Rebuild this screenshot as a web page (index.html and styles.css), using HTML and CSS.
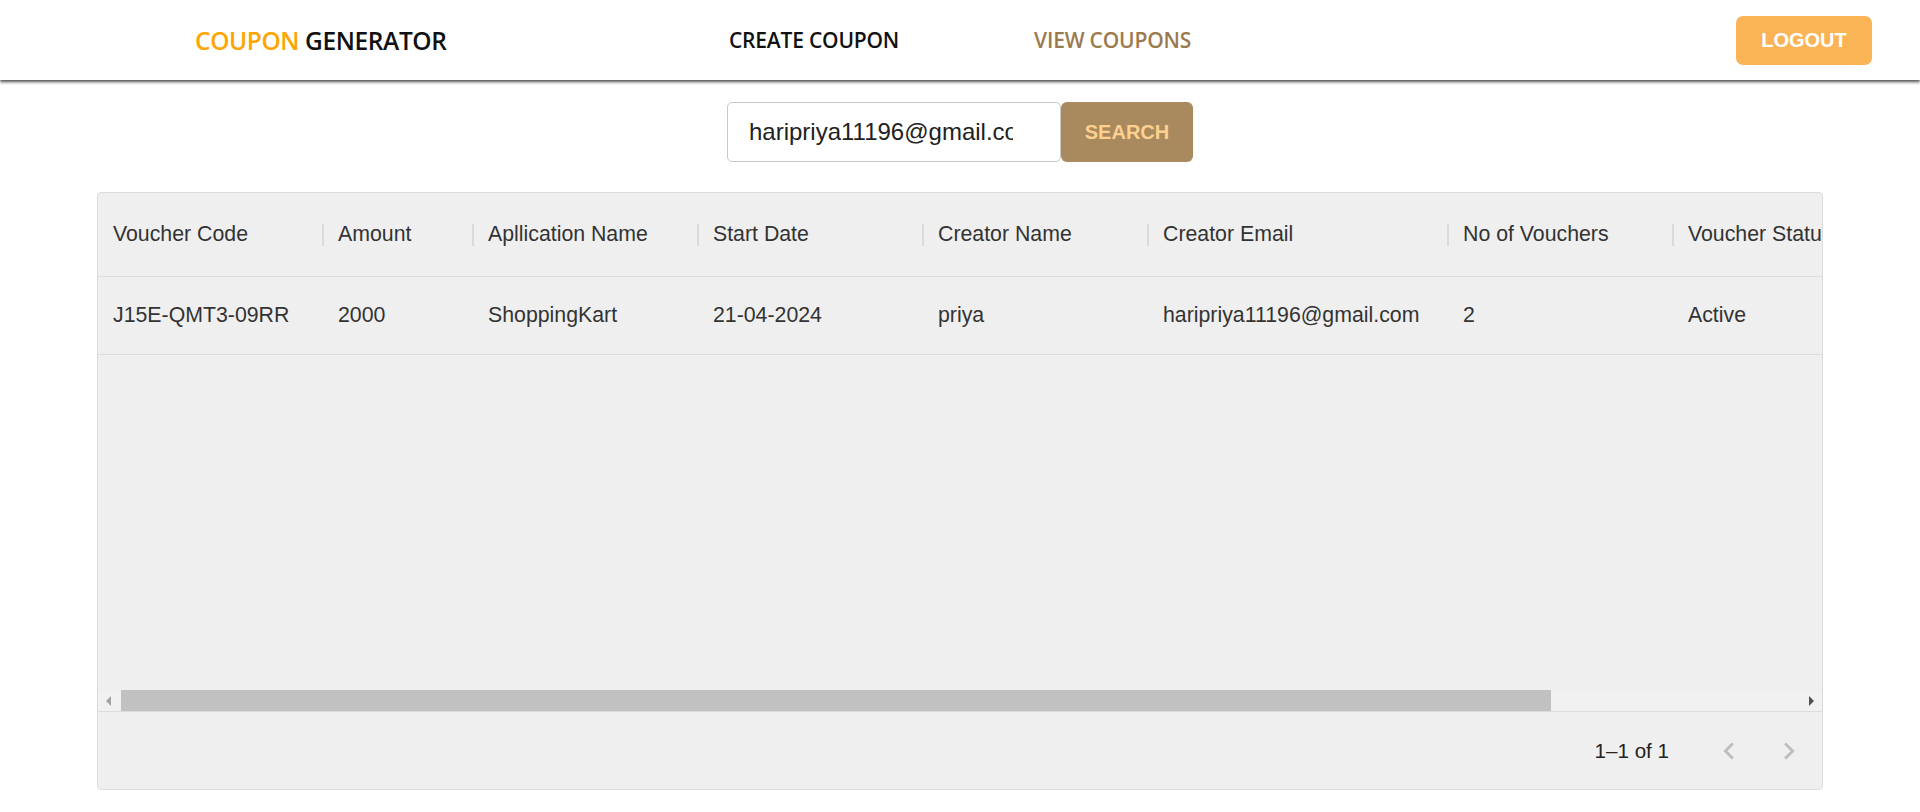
FILE: index.html
```html
<!DOCTYPE html>
<html lang="en">
<head>
<meta charset="utf-8">
<title>Coupon Generator</title>
<link rel="stylesheet" href="styles.css">
</head>
<body>
<header class="topbar">
  <div class="brand"><span class="brand-accent">COUPON</span> GENERATOR</div>
  <nav class="nav">
    <a class="nav-link">CREATE COUPON</a>
    <a class="nav-link nav-link--active">VIEW COUPONS</a>
  </nav>
  <button class="logout" type="button">LOGOUT</button>
</header>
<main class="page">
  <form class="search">
    <input class="search-input" type="text" value="haripriya11196@gmail.com">
    <button class="search-btn" type="button">SEARCH</button>
  </form>
  <section class="grid">
    <div class="grid-viewport">
      <div class="grid-head">
        <div class="cell head-cell w225">Voucher Code</div>
        <div class="cell head-cell w150">Amount</div>
        <div class="cell head-cell w225">Apllication Name</div>
        <div class="cell head-cell w225">Start Date</div>
        <div class="cell head-cell w225">Creator Name</div>
        <div class="cell head-cell w300">Creator Email</div>
        <div class="cell head-cell w225">No of Vouchers</div>
        <div class="cell head-cell w225">Voucher Status</div>
      </div>
      <div class="grid-row">
        <div class="cell w225">J15E-QMT3-09RR</div>
        <div class="cell w150">2000</div>
        <div class="cell w225">ShoppingKart</div>
        <div class="cell w225">21-04-2024</div>
        <div class="cell w225">priya</div>
        <div class="cell w300">haripriya11196@gmail.com</div>
        <div class="cell w225">2</div>
        <div class="cell w225">Active</div>
      </div>
    </div>
    <div class="hscroll">
      <span class="hscroll-btn hscroll-btn--left"></span>
      <div class="hscroll-track"><div class="hscroll-thumb"></div></div>
      <span class="hscroll-btn hscroll-btn--right"></span>
    </div>
    <div class="grid-footer">
      <span class="page-info">1–1 of 1</span>
      <div class="pager">
        <button class="pager-btn" type="button" aria-label="previous page">
          <svg viewBox="0 0 24 24" width="34" height="34"><path d="M15.41 7.41 14 6l-6 6 6 6 1.41-1.41L10.83 12z"/></svg>
        </button>
        <button class="pager-btn" type="button" aria-label="next page">
          <svg viewBox="0 0 24 24" width="34" height="34"><path d="M10 6 8.59 7.41 13.17 12l-4.58 4.59L10 18l6-6z"/></svg>
        </button>
      </div>
    </div>
  </section>
</main>
</body>
</html>
```

FILE: styles.css
```css
* { box-sizing: border-box; }

body {
  margin: 0;
  background: #fff;
  font-family: "Liberation Sans", Arial, sans-serif;
  color: #333;
}

.topbar {
  height: 80px;
  display: flex;
  align-items: center;
  padding: 0 48px 0 195px;
  background: #fff;
  box-shadow: 0 2px 3px rgba(0, 0, 0, 0.7);
  position: relative;
  z-index: 1;
}

.brand {
  width: 534px;
  font-family: "Open Sans", sans-serif;
  font-weight: 600;
  font-size: 24.5px;
  letter-spacing: -0.4px;
  color: #111;
}

.brand-accent { color: #ffa500; }

.nav {
  display: flex;
  gap: 135px;
}

.nav-link {
  font-family: "Open Sans", sans-serif;
  font-weight: 600;
  font-size: 21px;
  letter-spacing: -0.2px;
  color: #111;
  text-decoration: none;
}

.nav-link--active { color: #9b7a50; }

.logout {
  margin-left: auto;
  width: 136px;
  height: 49px;
  border: 0;
  border-radius: 7px;
  background: #fbb455;
  color: #fff;
  font-family: "Liberation Sans", Arial, sans-serif;
  font-weight: bold;
  font-size: 20px;
}

.page { padding-top: 22px; }

.search {
  display: flex;
  justify-content: center;
  margin: 0;
}

.search-input {
  width: 334px;
  height: 60px;
  padding: 0 47px 0 21px;
  border: 1px solid #c8c8c8;
  border-radius: 5px;
  font-family: "Liberation Sans", Arial, sans-serif;
  font-size: 24px;
  color: #222;
  background: #fff;
  outline: none;
}

.search-btn {
  width: 132px;
  height: 60px;
  border: 0;
  border-radius: 6px;
  background: #a88a5e;
  color: #fdd08f;
  font-family: "Liberation Sans", Arial, sans-serif;
  font-weight: bold;
  font-size: 20px;
}

.grid {
  margin: 30px 97px 0;
  height: 598px;
  border: 1px solid #dcdcdc;
  border-radius: 4px;
  background: #efefef;
  display: flex;
  flex-direction: column;
  overflow: hidden;
}

.grid-viewport {
  flex: 1;
  overflow: hidden;
}

.grid-head,
.grid-row {
  display: flex;
  width: max-content;
  min-width: 100%;
  border-bottom: 1px solid #dcdcdc;
}

.grid-head { height: 84px; }
.grid-row { height: 78px; }

.cell {
  flex: none;
  display: flex;
  align-items: center;
  padding-left: 15px;
  white-space: nowrap;
  font-size: 21.3px;
  color: #333;
  position: relative;
}

.head-cell::after {
  content: "";
  position: absolute;
  right: -1px;
  top: 50%;
  margin-top: -11px;
  width: 2px;
  height: 22px;
  background: #dadada;
}

.w150 { width: 150px; }
.w225 { width: 225px; }
.w300 { width: 300px; }

.hscroll {
  display: flex;
  height: 21px;
  flex: none;
  background: #f1f1f1;
}

.hscroll-btn {
  flex: none;
  width: 21px;
  height: 21px;
  display: flex;
  align-items: center;
  justify-content: center;
}

.hscroll-btn::before {
  content: "";
  width: 0;
  height: 0;
  border-top: 5px solid transparent;
  border-bottom: 5px solid transparent;
}

.hscroll-btn--left::before { border-right: 5px solid #a3a3a3; }
.hscroll-btn--right::before { border-left: 5px solid #505050; }

.hscroll-track {
  flex: 1;
  display: flex;
  padding-left: 2px;
}

.hscroll-thumb {
  width: 1430px;
  height: 100%;
  background: #c1c1c1;
}

.grid-footer {
  flex: none;
  height: 78px;
  border-top: 1px solid #dcdcdc;
  display: flex;
  align-items: center;
  justify-content: flex-end;
  padding-right: 13px;
}

.page-info {
  font-size: 20.6px;
  color: #222;
}

.pager {
  display: flex;
  gap: 20px;
  margin-left: 40px;
}

.pager-btn {
  width: 40px;
  height: 40px;
  padding: 0;
  border: 0;
  background: transparent;
  display: flex;
  align-items: center;
  justify-content: center;
}

.pager-btn svg { fill: #bdbdbd; }
```
